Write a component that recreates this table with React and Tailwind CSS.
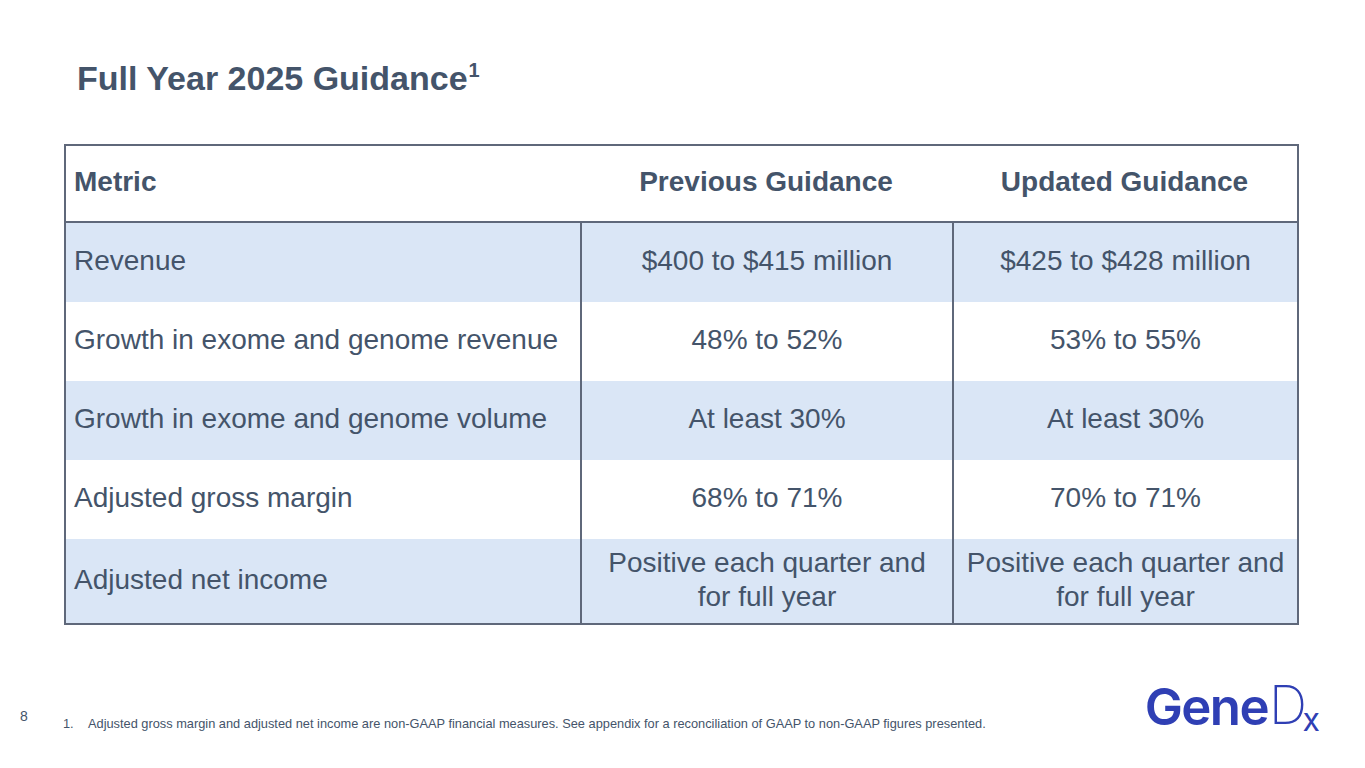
const rows = [
  { metric: 'Revenue', prev: '$400 to $415 million', next: '$425 to $428 million', shade: true },
  { metric: 'Growth in exome and genome revenue', prev: '48% to 52%', next: '53% to 55%', shade: false },
  { metric: 'Growth in exome and genome volume', prev: 'At least 30%', next: 'At least 30%', shade: true },
  { metric: 'Adjusted gross margin', prev: '68% to 71%', next: '70% to 71%', shade: false },
  {
    metric: 'Adjusted net income',
    prev: ['Positive each quarter and', 'for full year'],
    next: ['Positive each quarter and', 'for full year'],
    shade: true,
    tall: true,
  },
];

function Cell({ value }) {
  if (Array.isArray(value)) {
    return (
      <div className="leading-[34px]">
        {value.map((line) => (
          <div key={line}>{line}</div>
        ))}
      </div>
    );
  }
  return <span>{value}</span>;
}

function Logo() {
  return (
    <div className="flex items-end text-[#2f3fb4] font-['Inter',sans-serif] leading-none">
      <span className="text-[51px] font-semibold tracking-[-1.6px]">Gene</span>
      <span className="relative ml-[1px] text-[53px] font-extralight">
        D
        <span className="absolute right-[-13px] bottom-[-4px] text-[32px] font-normal">x</span>
      </span>
    </div>
  );
}

export default function App() {
  return (
    <div className="relative w-[1365px] h-[768px] bg-white overflow-hidden font-['Liberation_Sans',Arial,sans-serif] text-[#44546a]">
      <h1 className="pt-[58px] pl-[77px] text-[34px] font-bold leading-[40px]">
        Full Year 2025 Guidance
        <span className="relative -top-[13px] ml-[1px] text-[20px] leading-none">1</span>
      </h1>

      <div className="mt-[46px] ml-[64px] w-[1235px] border-2 border-[#5f687a]">
        <div className="grid grid-cols-[514px_372px_345px] h-[77px] items-center pb-[3px] border-b-2 border-[#5f687a] text-[28px] font-bold">
          <div className="pl-[8px]">Metric</div>
          <div className="text-center">Previous Guidance</div>
          <div className="text-center">Updated Guidance</div>
        </div>
        {rows.map((r) => (
          <div
            key={r.metric}
            className={`grid grid-cols-[514px_372px_345px] text-[28px] ${r.tall ? 'h-[84px]' : 'h-[79px]'} ${r.shade ? 'bg-[#dae6f6]' : 'bg-white'}`}
          >
            <div className="flex items-center pl-[8px] pb-[3px]">{r.metric}</div>
            <div className="flex items-center justify-center pb-[3px] text-center border-l-2 border-[#5f687a]">
              <Cell value={r.prev} />
            </div>
            <div className="flex items-center justify-center pb-[3px] text-center border-l-2 border-[#5f687a]">
              <Cell value={r.next} />
            </div>
          </div>
        ))}
      </div>

      <div className="absolute left-0 right-0 bottom-[36px] flex items-end">
        <div className="w-[63px] pl-[20px] pb-[8px] text-[14px] leading-[16px]">8</div>
        <div className="flex text-[12.8px] leading-[15px] pb-[1px]">
          <span className="w-[25px]">1.</span>
          <span>
            Adjusted gross margin and adjusted net income are non-GAAP financial measures. See appendix for a reconciliation of GAAP to non-GAAP figures presented.
          </span>
        </div>
        <div className="ml-auto mr-[58px]">
          <Logo />
        </div>
      </div>
    </div>
  );
}
